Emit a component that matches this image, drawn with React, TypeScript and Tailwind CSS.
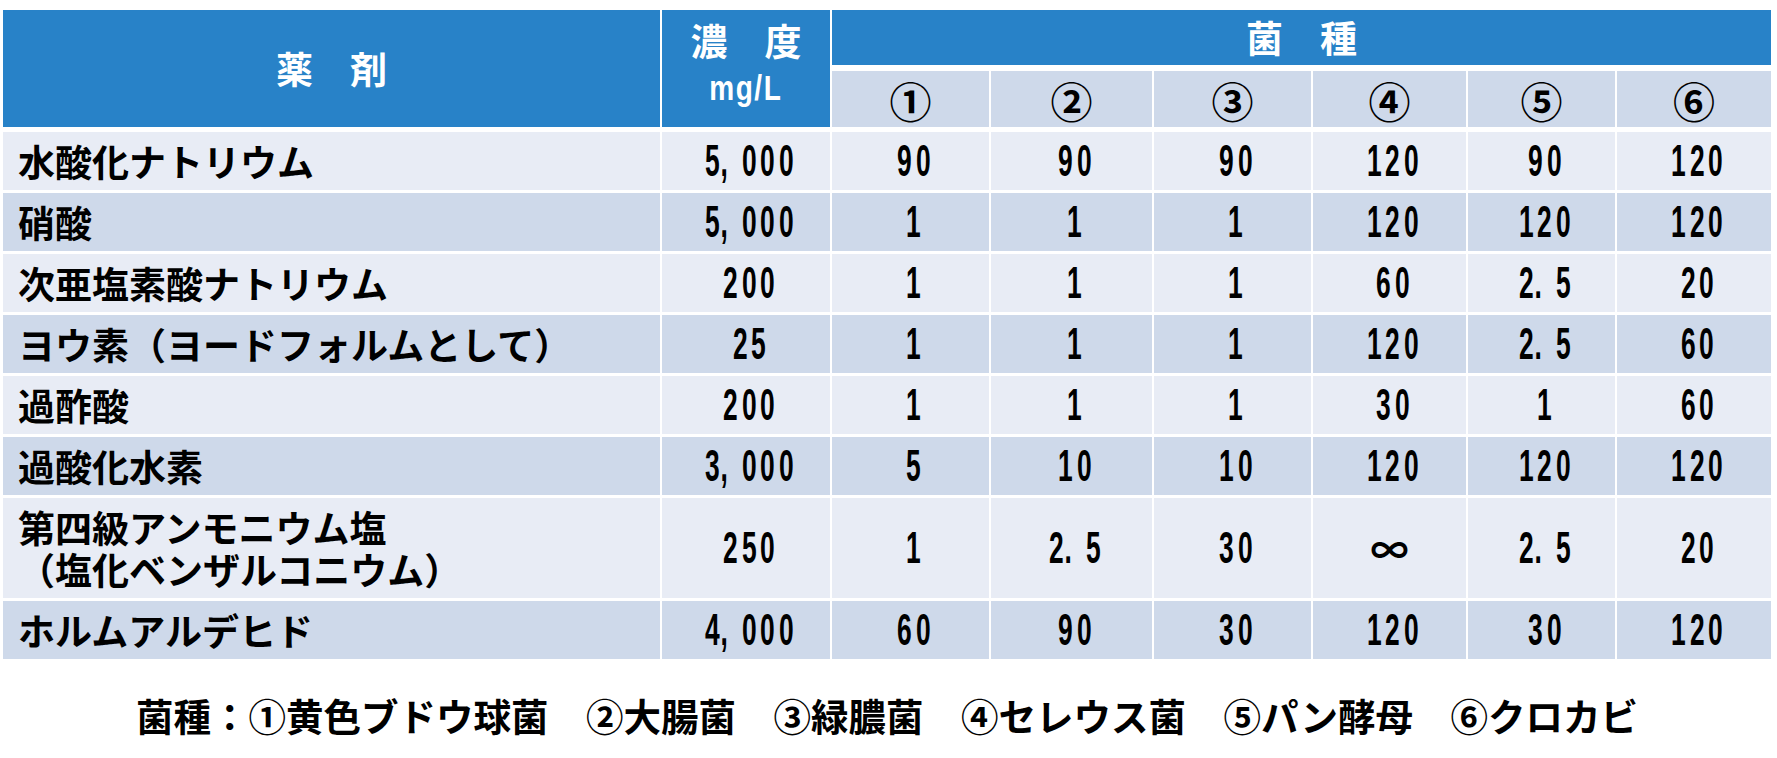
import React from "react";

const COLS = "grid grid-cols-[657px_168px_157px_161px_157px_153px_147px_154px] gap-x-[2px]";
const JP = "font-['Noto_Sans_CJK_JP','Noto_Sans',sans-serif]";

type Row = { name: string[]; conc: string; vals: string[] };

const rows: Row[] = [
  { name: ["水酸化ナトリウム"], conc: "5,000", vals: ["90", "90", "90", "120", "90", "120"] },
  { name: ["硝酸"], conc: "5,000", vals: ["1", "1", "1", "120", "120", "120"] },
  { name: ["次亜塩素酸ナトリウム"], conc: "200", vals: ["1", "1", "1", "60", "2.5", "20"] },
  { name: ["ヨウ素（ヨードフォルムとして）"], conc: "25", vals: ["1", "1", "1", "120", "2.5", "60"] },
  { name: ["過酢酸"], conc: "200", vals: ["1", "1", "1", "30", "1", "60"] },
  { name: ["過酸化水素"], conc: "3,000", vals: ["5", "10", "10", "120", "120", "120"] },
  {
    name: ["第四級アンモニウム塩", "（塩化ベンザルコニウム）"],
    conc: "250",
    vals: ["1", "2.5", "30", "∞", "2.5", "20"],
  },
  { name: ["ホルムアルデヒド"], conc: "4,000", vals: ["60", "90", "30", "120", "30", "120"] },
];

function Num({ v }: { v: string }) {
  if (v === "∞") {
    return <span className={`${JP} text-[38px] font-bold leading-none`}>∞</span>;
  }
  return (
    <span className="inline-flex font-['Liberation_Sans',sans-serif] text-[44px] font-bold leading-none">
      {v.split("").map((c, i) => (
        <span
          key={i}
          className={c === "," || c === "." ? "inline-block w-[18.5px] text-left" : "inline-block w-[18.5px] text-center"}
        >
          <span className="inline-block scale-x-[0.6]">{c}</span>
        </span>
      ))}
    </span>
  );
}

export default function App() {
  return (
    <div className={`w-[1777px] h-[758px] bg-white ${JP} text-black`}>
      <div className="ml-[3px] pt-[10px] w-[1768px]">
        {/* header */}
        <div className={`${COLS} grid-rows-[55px_56px] gap-y-[6px]`}>
          <div className="row-span-2 bg-[#2882C8] flex items-center justify-center text-white text-[37px] font-bold">
            薬　剤
          </div>
          <div className="row-span-2 bg-[#2882C8] flex flex-col items-center pt-[8px] text-white">
            <div className="text-[37px] font-bold leading-[44px]">濃　度</div>
            <div className="mt-[8px] font-['Liberation_Sans',sans-serif] text-[35px] font-bold leading-[36px] tracking-[2px] scale-x-[0.8]">
              mg/L
            </div>
          </div>
          <div className="col-span-6 bg-[#2882C8] flex items-center justify-center text-white text-[37px] font-bold">
            菌　種
          </div>
          {["①", "②", "③", "④", "⑤", "⑥"].map((c) => (
            <div key={c} className="bg-[#CED9EA] flex items-center justify-center text-[42px] font-bold">
              {c}
            </div>
          ))}
        </div>

        {/* body */}
        <div className={`${COLS} mt-[5px] gap-y-[3px]`}>
          {rows.map((r, ri) => {
            const bg = ri % 2 === 0 ? "bg-[#E8ECF5]" : "bg-[#CED9EA]";
            const h = r.name.length > 1 ? "h-[100px]" : "h-[58px]";
            return (
              <React.Fragment key={ri}>
                <div className={`${bg} ${h} flex items-center pl-[15px] text-[37px] font-bold leading-[42px]`}>
                  <div className="whitespace-nowrap">
                    {r.name.length > 1 ? (
                      <>
                        {r.name[0]}
                        <br />
                        {r.name[1]}
                      </>
                    ) : (
                      r.name[0]
                    )}
                  </div>
                </div>
                <div className={`${bg} ${h} flex items-center justify-center`}>
                  <Num v={r.conc} />
                </div>
                {r.vals.map((v, vi) => (
                  <div key={vi} className={`${bg} ${h} flex items-center justify-center`}>
                    <Num v={v} />
                  </div>
                ))}
              </React.Fragment>
            );
          })}
        </div>

        {/* legend */}
        <div className="mt-[34px] flex justify-center text-[37.5px] font-bold leading-[44px] whitespace-nowrap">
          菌種：①黄色ブドウ球菌　②大腸菌　③緑膿菌　④セレウス菌　⑤パン酵母　⑥クロカビ
        </div>
      </div>
    </div>
  );
}
